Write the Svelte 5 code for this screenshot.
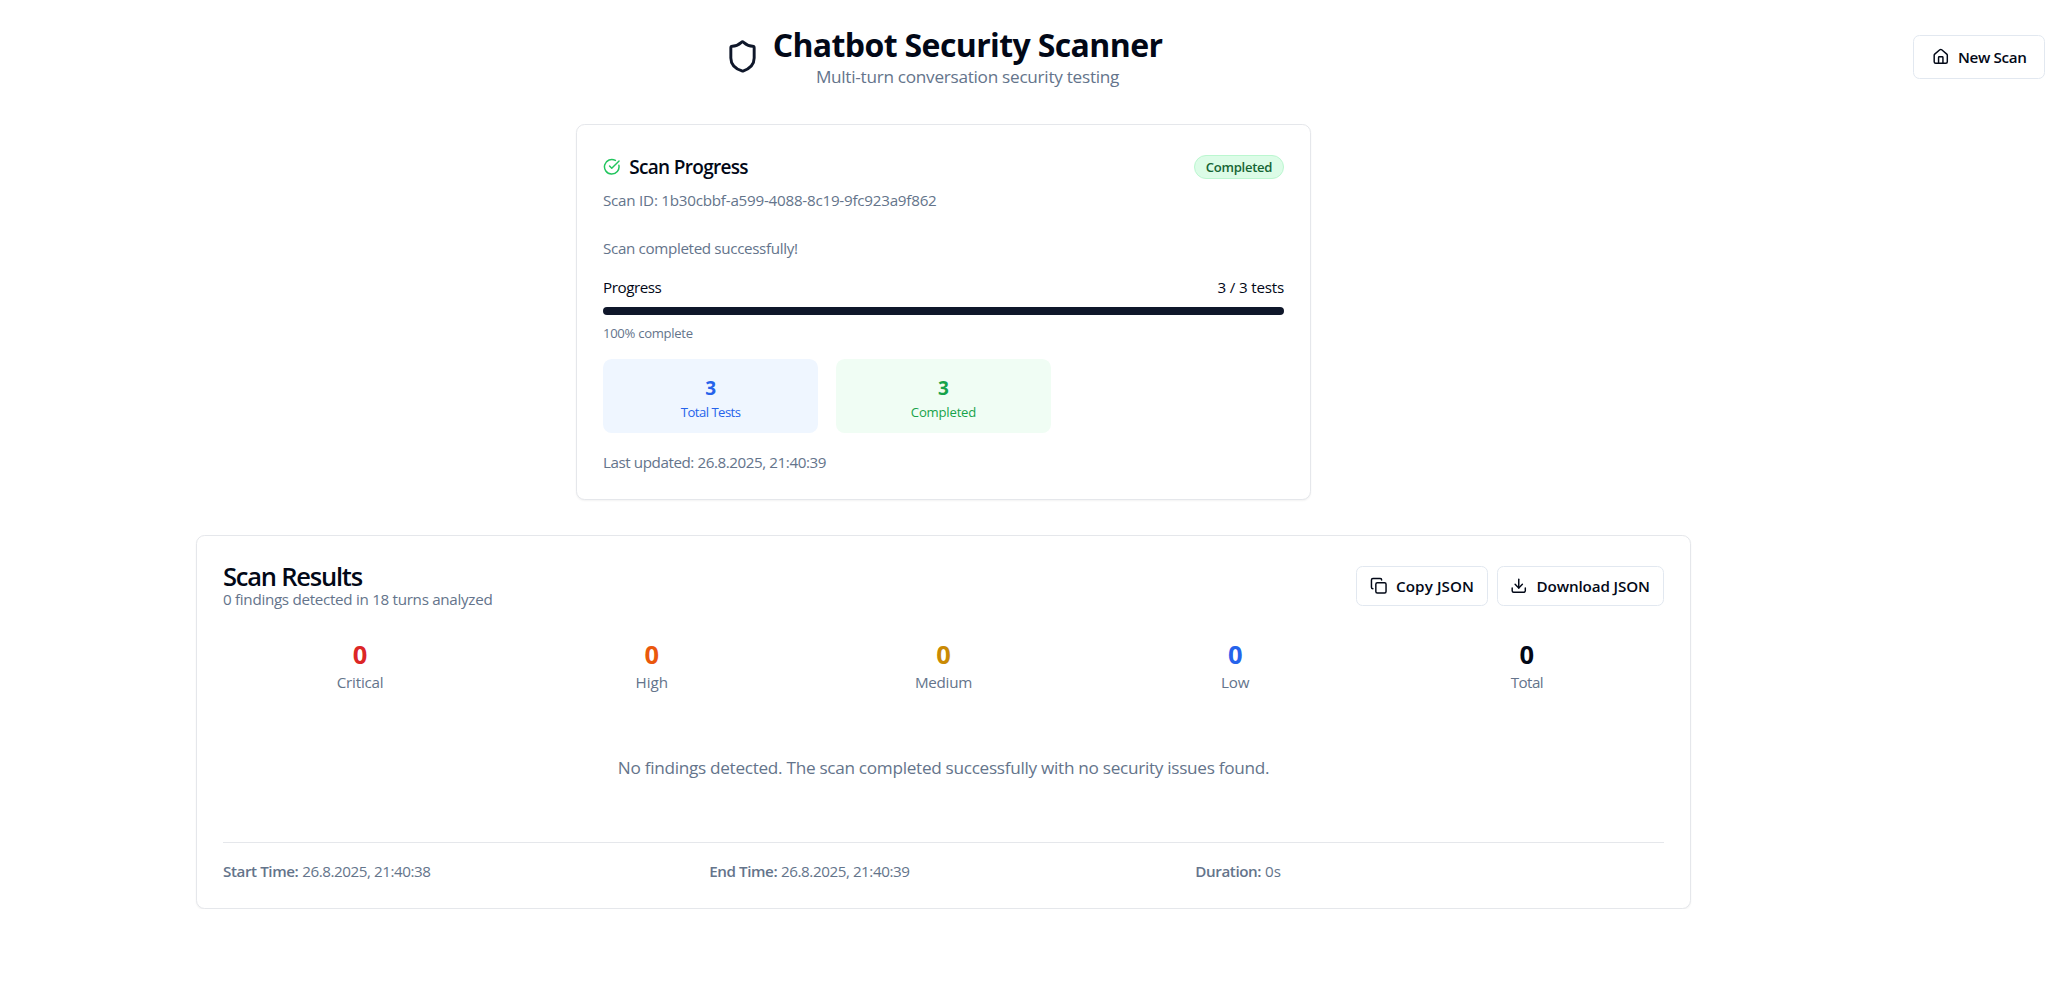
<script>
  const severities = [
    { label: 'Critical', count: 0, tone: 'red', track: -0.2 },
    { label: 'High', count: 0, tone: 'orange', track: 0 },
    { label: 'Medium', count: 0, tone: 'yellow', track: -0.28 },
    { label: 'Low', count: 0, tone: 'blue', track: -0.15 },
    { label: 'Total', count: 0, tone: 'dark', track: -0.6 }
  ];
</script>

<div class="page">
  <header class="top">
    <div class="brand">
      <svg class="shield" viewBox="0 0 24 24"><path d="M20 13c0 5-3.5 7.5-7.66 8.95a1 1 0 0 1-.67-.01C7.5 20.5 4 18 4 13V6a1 1 0 0 1 1-1c2 0 4.5-1.2 6.24-2.72a1.17 1.17 0 0 1 1.52 0C14.51 3.81 17 5 19 5a1 1 0 0 1 1 1z" /></svg>
      <div class="brand-text">
        <h1>Chatbot Security Scanner</h1>
        <p class="subtitle">Multi-turn conversation security testing</p>
      </div>
    </div>
    <button class="btn btn-new">
      <svg viewBox="0 0 24 24"><path d="M15 21v-8a1 1 0 0 0-1-1h-4a1 1 0 0 0-1 1v8" /><path d="M3 10a2 2 0 0 1 .709-1.528l7-5.999a2 2 0 0 1 2.582 0l7 5.999A2 2 0 0 1 21 10v9a2 2 0 0 1-2 2H5a2 2 0 0 1-2-2z" /></svg>
      <span>New Scan</span>
    </button>
  </header>

  <main>
    <section class="card progress-card">
      <div class="card-title-row">
        <svg class="check" viewBox="0 0 24 24"><path d="M21.801 10A10 10 0 1 1 17 3.335" /><path d="m9 11 3 3L22 4" /></svg>
        <h2>Scan Progress</h2>
        <span class="badge">Completed</span>
      </div>
      <p class="muted scan-id">Scan ID: 1b30cbbf-a599-4088-8c19-9fc923a9f862</p>
      <p class="muted message">Scan completed successfully!</p>
      <div class="progress-row"><span class="progress-label">Progress</span><span class="progress-count">3 / 3 tests</span></div>
      <div class="bar"></div>
      <p class="percent">100% complete</p>
      <div class="tiles">
        <div class="tile tile-blue"><strong>3</strong><span>Total Tests</span></div>
        <div class="tile tile-green"><strong>3</strong><span>Completed</span></div>
      </div>
      <p class="muted updated">Last updated: 26.8.2025, 21:40:39</p>
    </section>

    <section class="card results-card">
      <div class="results-head">
        <div>
          <h2 class="results-title">Scan Results</h2>
          <p class="muted findings">0 findings detected in 18 turns analyzed</p>
        </div>
        <div class="actions">
          <button class="btn btn-sm btn-copy">
            <svg viewBox="0 0 24 24"><rect width="14" height="14" x="8" y="8" rx="2" /><path d="M4 16c-1.1 0-2-.9-2-2V4c0-1.1.9-2 2-2h10c1.1 0 2 .9 2 2" /></svg>
            <span>Copy JSON</span>
          </button>
          <button class="btn btn-sm btn-download">
            <svg viewBox="0 0 24 24"><path d="M21 15v4a2 2 0 0 1-2 2H5a2 2 0 0 1-2-2v-4" /><path d="m7 10 5 5 5-5" /><path d="M12 15V3" /></svg>
            <span>Download JSON</span>
          </button>
        </div>
      </div>
      <div class="severities">
        {#each severities as s}
          <div class="severity"><strong class={s.tone}>{s.count}</strong><span class="muted" style="letter-spacing: {s.track}px">{s.label}</span></div>
        {/each}
      </div>
      <p class="empty">No findings detected. The scan completed successfully with no security issues found.</p>
      <footer class="times">
        <div class="muted"><b>Start Time:</b> <span>26.8.2025, 21:40:38</span></div>
        <div class="muted"><b>End Time:</b> <span>26.8.2025, 21:40:39</span></div>
        <div class="muted"><b>Duration:</b> <span class="duration">0s</span></div>
      </footer>
    </section>
  </main>
</div>

<style>
  :global(body) { background: #fff; }
  .page { font-family: "Open Sans", "Noto Sans", sans-serif; color: #020817; font-size: 15.2px; line-height: 22px; padding-top: 24px; box-sizing: border-box; }
  h1, h2, p { margin: 0; }
  svg { fill: none; stroke: currentColor; stroke-width: 2; stroke-linecap: round; stroke-linejoin: round; flex: none; }
  .top { display: flex; align-items: center; height: 65px; }
  .brand { width: 1887px; flex: none; display: flex; align-items: center; justify-content: center; gap: 13px; }
  .shield { width: 35px; height: 35px; color: #0f172a; }
  .brand-text { text-align: center; padding-top: 2px; }
  h1 { font-size: 32px; line-height: 39px; font-weight: 700; letter-spacing: -0.62px; white-space: nowrap; }
  .subtitle { font-size: 17.2px; line-height: 26px; letter-spacing: -0.28px; color: #64748b; }
  .btn { display: flex; align-items: center; box-sizing: border-box; border: 1px solid #e2e8f0; border-radius: 6.5px; background: #fff; color: #020817; font-family: inherit; font-size: 15.2px; font-weight: 600; white-space: nowrap; }
  .btn svg { width: 17.5px; height: 17.5px; }
  .btn-new { width: 132px; height: 44px; margin-left: 26px; padding: 0 0 0 17.5px; gap: 9px; flex: none; letter-spacing: -0.36px; }
  main { width: 1887px; }
  .card { box-sizing: border-box; border: 1px solid #e5e7eb; border-radius: 8.7px; background: #fff; box-shadow: 0 1px 2px rgba(0, 0, 0, 0.05); margin: 35px auto 0; }
  .muted { color: #64748b; }
  .progress-card { width: 735px; height: 376px; padding: 30px 26px 0; }
  .card-title-row { display: flex; align-items: center; height: 24px; }
  .check { width: 17.5px; height: 17.5px; color: #22c55e; margin-right: 8.7px; }
  h2 { font-size: 19px; line-height: 24px; font-weight: 600; letter-spacing: -0.68px; }
  .badge { margin-left: auto; box-sizing: border-box; width: 90px; height: 24px; border: 1px solid #bbf7d0; border-radius: 12px; background: #dcfce7; color: #166534; font-size: 13.1px; line-height: 23px; font-weight: 600; letter-spacing: -0.3px; text-align: center; }
  .scan-id { margin-top: 10px; letter-spacing: -0.24px; }
  .message { margin-top: 26px; letter-spacing: -0.35px; }
  .progress-row { display: flex; justify-content: space-between; margin-top: 17px; }
  .progress-label { letter-spacing: -0.45px; }
  .progress-count { letter-spacing: -0.2px; }
  .bar { height: 8.7px; margin-top: 8.6px; border-radius: 5px; background: #0f172a; }
  .percent { font-size: 13.1px; line-height: 18px; margin-top: 8.7px; letter-spacing: -0.3px; color: #64748b; }
  .tiles { display: grid; grid-template-columns: repeat(3, 1fr); gap: 17.5px; margin-top: 16.6px; }
  .tile { box-sizing: border-box; height: 74.4px; padding-top: 14px; border-radius: 8.7px; display: flex; flex-direction: column; align-items: center; }
  .tile strong { font-size: 19px; line-height: 30px; font-weight: 700; }
  .tile span { font-size: 13.1px; line-height: 18px; }
  .tile-blue { background: #eff6ff; color: #2563eb; }
  .tile-blue span { letter-spacing: -0.53px; }
  .tile-green { background: #f0fdf4; color: #16a34a; }
  .tile-green span { letter-spacing: -0.19px; }
  .updated { margin-top: 17.6px; letter-spacing: -0.43px; }
  .results-card { width: 1495px; height: 374px; padding: 26.5px 26px 0; }
  .results-head { display: flex; justify-content: space-between; align-items: flex-start; height: 48px; }
  .results-title { font-size: 25.5px; line-height: 26px; letter-spacing: -1.22px; }
  .findings { margin-top: -0.6px; letter-spacing: -0.3px; }
  .actions { display: flex; gap: 8.5px; padding-top: 3.5px; }
  .btn-sm { height: 40px; padding: 0 0 0 12.5px; gap: 9px; }
  .btn-copy { width: 132px; letter-spacing: 0.1px; }
  .btn-download { width: 167.5px; letter-spacing: -0.12px; }
  .severities { display: grid; grid-template-columns: repeat(5, 1fr); gap: 17.5px; margin-top: 26.5px; }
  .severity { display: flex; flex-direction: column; align-items: center; }
  .severity strong { font-size: 25.5px; line-height: 34px; font-weight: 700; }
  .severity span { margin-top: -0.2px; }
  .red { color: #dc2626; }
  .orange { color: #ea580c; }
  .yellow { color: #ca8a04; }
  .blue { color: #2563eb; }
  .dark { color: #020817; }
  .empty { margin-top: 62.2px; text-align: center; font-size: 17.2px; line-height: 26px; letter-spacing: -0.3px; color: #64748b; }
  .times { display: grid; grid-template-columns: repeat(3, 1fr); gap: 17.5px; margin-top: 61px; padding-top: 16.8px; border-top: 1px solid #e5e7eb; }
  .times b { font-weight: 600; letter-spacing: -0.42px; }
  .times span { letter-spacing: -0.44px; }
  .times .duration { letter-spacing: 0; }
</style>
